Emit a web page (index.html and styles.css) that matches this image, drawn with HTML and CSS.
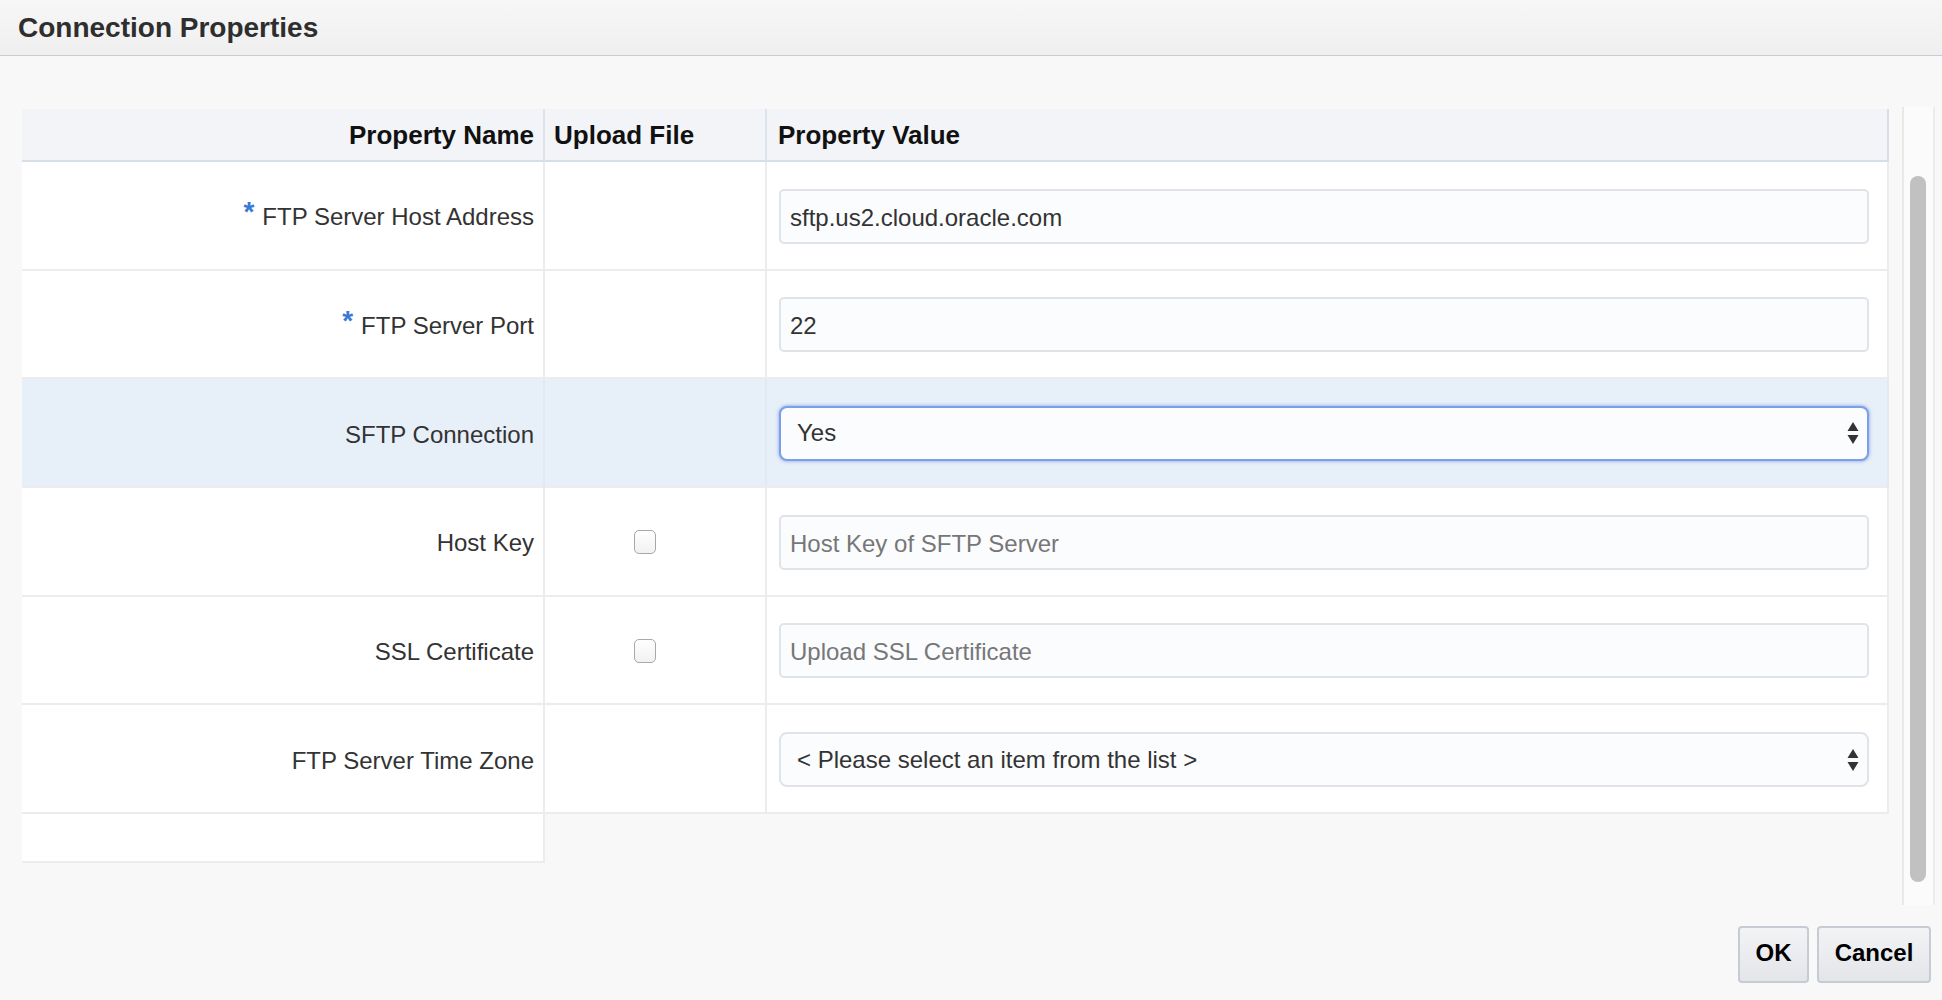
FILE: index.html
```html
<!DOCTYPE html>
<html>
<head>
<meta charset="utf-8">
<title>Connection Properties</title>
<link rel="stylesheet" href="styles.css">
</head>
<body>
<div class="titlebar">Connection Properties</div>
<div class="main">
  <div class="table-wrap">
    <div class="grid">
      <div class="hcell h-name">Property Name</div>
      <div class="hcell h-upload">Upload File</div>
      <div class="hcell h-value">Property Value</div>

      <div class="cell label"><span class="req">*</span>FTP Server Host Address</div>
      <div class="cell upload"></div>
      <div class="cell value"><input class="field" type="text" value="sftp.us2.cloud.oracle.com"></div>

      <div class="cell label"><span class="req">*</span>FTP Server Port</div>
      <div class="cell upload"></div>
      <div class="cell value"><input class="field" type="text" value="22"></div>

      <div class="cell label hl">SFTP Connection</div>
      <div class="cell upload hl"></div>
      <div class="cell value hl">
        <div class="select focused"><span class="sel-text">Yes</span>
          <svg class="arrows" width="12" height="22" viewBox="0 0 12 22"><path d="M6 0 L11.5 9 L0.5 9 Z M0.5 13 L11.5 13 L6 22 Z" fill="#333"/></svg>
        </div>
      </div>

      <div class="cell label">Host Key</div>
      <div class="cell upload"><span class="checkbox"></span></div>
      <div class="cell value"><input class="field" type="text" placeholder="Host Key of SFTP Server"></div>

      <div class="cell label">SSL Certificate</div>
      <div class="cell upload"><span class="checkbox"></span></div>
      <div class="cell value"><input class="field" type="text" placeholder="Upload SSL Certificate"></div>

      <div class="cell label">FTP Server Time Zone</div>
      <div class="cell upload"></div>
      <div class="cell value">
        <div class="select"><span class="sel-text">&lt; Please select an item from the list &gt;</span>
          <svg class="arrows" width="12" height="22" viewBox="0 0 12 22"><path d="M6 0 L11.5 9 L0.5 9 Z M0.5 13 L11.5 13 L6 22 Z" fill="#333"/></svg>
        </div>
      </div>

      <div class="cell spacer"></div>
    </div>
  </div>
  <div class="track"><div class="thumb"></div></div>
</div>
<div class="footer">
  <button class="btn btn-ok">OK</button>
  <button class="btn btn-cancel">Cancel</button>
</div>
</body>
</html>
```
FILE: styles.css
```css
html, body {
  margin: 0;
  padding: 0;
}
body {
  width: 1942px;
  height: 1000px;
  overflow: hidden;
  background: #f8f8f8;
  font-family: "Liberation Sans", Arial, Helvetica, sans-serif;
  color: #333;
}
.titlebar {
  height: 55px;
  box-sizing: content-box;
  border-bottom: 1px solid #c8ccd6;
  background: linear-gradient(#f7f7f7, #efefef);
  padding-left: 18px;
  display: flex;
  align-items: center;
  font-size: 28px;
  font-weight: bold;
  color: #2e2e2e;
}
.main {
  display: flex;
  margin-top: 51px;
  margin-left: 22px;
  height: 798px;
}
.table-wrap {
  width: 1867px;
  padding-top: 2px;
}
.grid {
  display: grid;
  grid-template-columns: 523px 222px 1122px;
}
.hcell {
  box-sizing: border-box;
  height: 53px;
  padding-top: 2px;
  background: #f2f4f7;
  border-bottom: 2px solid #d7dee7;
  border-right: 2px solid #dde3ea;
  display: flex;
  align-items: center;
  font-size: 26px;
  font-weight: bold;
  color: #111;
}
.h-name {
  justify-content: flex-end;
  padding-right: 9px;
}
.h-upload {
  padding-left: 9px;
}
.h-value {
  padding-left: 11px;
  border-right-color: #d7dee7;
}
.cell {
  box-sizing: border-box;
  height: 108.67px;
  background: #fff;
  border-bottom: 2px solid #ececec;
  border-right: 2px solid #ececec;
  display: flex;
  align-items: center;
  font-size: 24px;
}
.cell.hl {
  background: #e7eff8;
  border-right-color: #e3e9f1;
}
.label {
  justify-content: flex-end;
  padding-right: 9px;
  padding-top: 4px;
  color: #333;
}
.req {
  color: #3a78d6;
  font-weight: bold;
  font-size: 28px;
  position: relative;
  top: -5px;
  margin-right: 8px;
}
.upload {
  padding-left: 89px;
  padding-top: 2px;
}
.value {
  padding-left: 12px;
  padding-right: 18px;
  padding-top: 2px;
}
.field {
  box-sizing: border-box;
  width: 100%;
  height: 55px;
  border: 2px solid #e0e3e8;
  border-radius: 5px;
  background: #fbfcfe;
  font-family: inherit;
  font-size: 24px;
  color: #333;
  padding: 3px 9px 0;
  outline: none;
}
.field::placeholder {
  color: #777;
}
.select {
  box-sizing: border-box;
  width: 100%;
  height: 55px;
  border: 2px solid #e0e3e8;
  border-radius: 8px;
  background: #fbfcfe;
  display: flex;
  align-items: center;
  padding: 0 8px 0 16px;
  font-size: 24px;
  color: #333;
}
.select.focused {
  border-color: #7c9fe5;
  box-shadow: 0 0 3px 1px rgba(110, 150, 230, 0.55);
  padding-bottom: 1px;
}
.sel-text {
  flex: 1;
}
.arrows {
  display: block;
}
.checkbox {
  display: block;
  box-sizing: border-box;
  width: 22px;
  height: 24px;
  border: 1px solid #a8a8a8;
  border-radius: 5px;
  background: linear-gradient(#ffffff, #f1f1f1);
}
.spacer {
  height: 49px;
}
.track {
  box-sizing: border-box;
  margin-left: 13px;
  width: 33px;
  height: 798px;
  border-left: 2px solid #e8e8e8;
  border-right: 2px solid #ececec;
  background: #fbfbfb;
  padding-top: 69px;
  padding-left: 6px;
}
.thumb {
  width: 16px;
  height: 706px;
  border-radius: 8px;
  background: #c1c1c1;
}
.footer {
  display: flex;
  justify-content: flex-end;
  gap: 8px;
  padding-top: 21px;
  padding-right: 11px;
}
.btn {
  box-sizing: border-box;
  height: 57px;
  border: 2px solid #c6cbd4;
  border-radius: 4px;
  background: linear-gradient(#f2f3f5, #e3e5e9);
  font-family: "Liberation Sans", Arial, sans-serif;
  font-size: 24px;
  font-weight: bold;
  color: #000;
  padding: 0 0 3px;
}
.btn-ok {
  width: 71px;
}
.btn-cancel {
  width: 114px;
}
```
